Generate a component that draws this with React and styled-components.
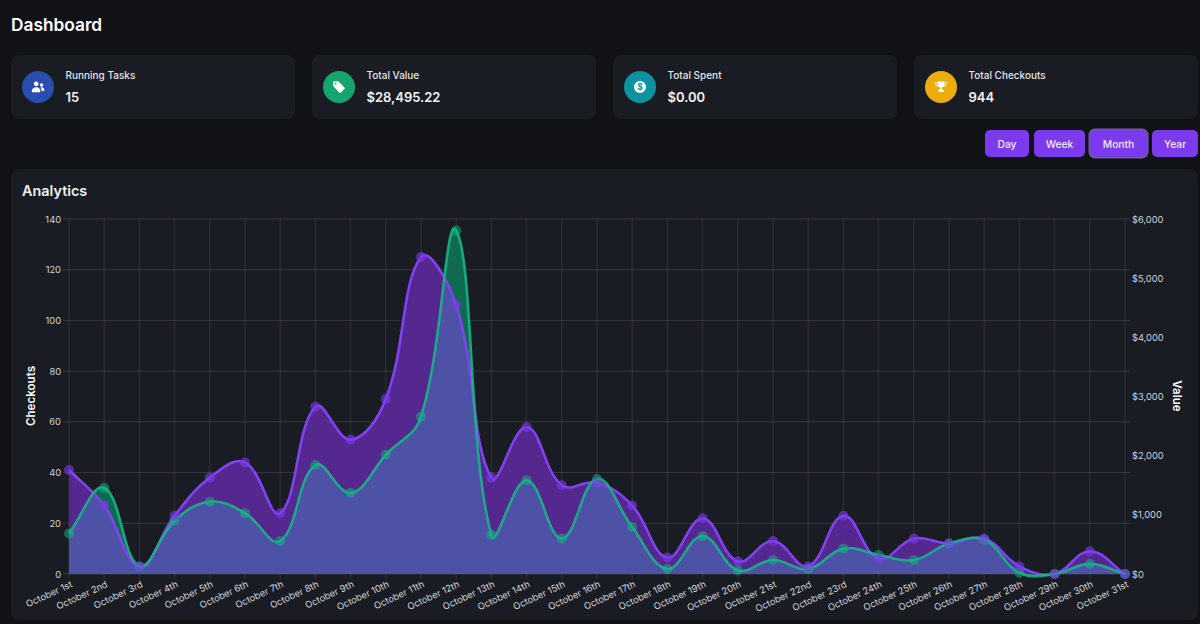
import React from "react";
import styled, { createGlobalStyle } from "styled-components";

const Global = createGlobalStyle`
  html, body { margin: 0; padding: 0; background: #111216; overflow: hidden; }
  body { font-family: Inter, "Liberation Sans", sans-serif; }
`;

const Page = styled.div`
  width: 1200px;
  height: 624px;
  box-sizing: border-box;
  padding: 14px 2px 0 11px;
  color: #fff;
  overflow: hidden;
`;
const Heading = styled.h1`
  margin: 0 0 19px;
  font-size: 17.3px;
  line-height: 22px;
  font-weight: 600;
  color: #fff;
`;
const Stats = styled.div`
  display: grid;
  grid-template-columns: repeat(4, 284px);
  column-gap: 17px;
`;
const Card = styled.div`
  height: 64px;
  box-sizing: border-box;
  padding: 0 11px;
  display: flex;
  align-items: center;
  gap: 12px;
  background: #1a1c23;
  border-radius: 8px;
`;
const Badge = styled.div`
  width: 32px;
  height: 32px;
  border-radius: 50%;
  background: ${(p) => p.$bg};
  display: flex;
  align-items: center;
  justify-content: center;
  flex: none;
`;
const CardText = styled.div`
  display: flex;
  flex-direction: column;
  gap: 6px;
  margin-left: -0.5px;
`;
const CardLabel = styled.div`
  font-size: 10px;
  line-height: 14px;
  font-weight: 500;
  color: #e2e4e9;
`;
const CardValue = styled.div`
  font-size: 13px;
  line-height: 18px;
  font-weight: 600;
  color: #f3f4f6;
`;
const Ranges = styled.div`
  display: flex;
  justify-content: flex-end;
  gap: 5px;
  margin-top: 11px;
  height: 28px;
`;
const RangeButton = styled.button`
  height: 27px;
  width: ${(p) => p.$w}px;
  box-sizing: border-box;
  padding: 0;
  border: none;
  border-radius: 5px;
  background: #7c3aed;
  color: #f3eaff;
  font-family: inherit;
  font-size: 10.3px;
  font-weight: 500;
  box-shadow: ${(p) => (p.$active ? "0 0 0 1.5px #6a6488" : "none")};
`;
const Panel = styled.section`
  margin-top: 11px;
  height: 451px;
  background: #1a1c23;
  border-radius: 8px;
  position: relative;
`;
const PanelTitle = styled.h2`
  margin: 0;
  padding: 13px 11px 0;
  font-size: 14.4px;
  line-height: 18px;
  font-weight: 600;
  color: #f0f1f4;
`;
const ChartSvg = styled.svg`
  display: block;
  position: absolute;
  left: 0;
  top: 0;
`;

const purple = [41,27,3,23,38,44,24,66,53,69,125,106,38,58,35,36,27,6.5,22,5,13,3,23,6,14,12,14,3,0,9,0];
const green = [16,34,3,21,28.5,24,13,43,32,47,62,135.5,15.5,37,14,37.5,18.5,2,15,1.5,5.5,2,10,7.5,5.5,12,13.5,0.5,0,4,0];

const X0 = 58, X1 = 1114, Y0 = 405, Y1 = 50;
const px = (i) => X0 + (i * (X1 - X0)) / 30;
const py = (v) => Y0 - (v / 140) * (Y0 - Y1);
const ord = (n) => {
  if (n === 1 || n === 21 || n === 31) return n + "st";
  if (n === 2 || n === 22) return n + "nd";
  if (n === 3 || n === 23) return n + "rd";
  return n + "th";
};

function spline(vals, t = 0.4) {
  const p = vals.map((v, i) => [px(i), py(v)]);
  let d = `M${p[0][0]} ${p[0][1]}`;
  const ctrl = (a, b, c) => {
    const d01 = Math.hypot(b[0] - a[0], b[1] - a[1]);
    const d12 = Math.hypot(c[0] - b[0], c[1] - b[1]);
    const s = d01 + d12 || 1;
    const fa = (t * d01) / s, fb = (t * d12) / s;
    return [
      [b[0] - fa * (c[0] - a[0]), b[1] - fa * (c[1] - a[1])],
      [b[0] + fb * (c[0] - a[0]), b[1] + fb * (c[1] - a[1])],
    ];
  };
  const cs = p.map((b, i) => ctrl(p[Math.max(i - 1, 0)], b, p[Math.min(i + 1, p.length - 1)]));
  for (let i = 1; i < p.length; i++) {
    const c1 = cs[i - 1][1], c2 = cs[i][0];
    d += `C${c1[0]} ${c1[1]} ${c2[0]} ${c2[1]} ${p[i][0]} ${p[i][1]}`;
  }
  return d;
}

const purpleLine = spline(purple);
const greenLine = spline(green);
const close = `L${X1} ${Y0}L${X0} ${Y0}Z`;

function Chart() {
  const hTicks = [0, 20, 40, 60, 80, 100, 120, 140];
  const rTicks = ["$0", "$1,000", "$2,000", "$3,000", "$4,000", "$5,000", "$6,000"];
  return (
    <ChartSvg width="1187" height="451" viewBox="0 0 1187 451">
      <defs>
        <clipPath id="purpleArea"><path d={purpleLine + close} /></clipPath>
      </defs>
      {hTicks.map((v) => (
        <line key={v} x1={X0 - 6} x2={X1 + 5} y1={py(v)} y2={py(v)} stroke="#ffffff" strokeOpacity="0.12" />
      ))}
      {purple.map((_, i) => (
        <line key={i} x1={px(i)} x2={px(i)} y1={Y1} y2={Y0 + 5} stroke="#ffffff" strokeOpacity="0.1" />
      ))}
      {hTicks.map((v) => (
        <text key={v} x={X0 - 8} y={py(v) + 3.5} textAnchor="end" fontSize="9.3" fill="#d2d4da">{v}</text>
      ))}
      {rTicks.map((v, i) => (
        <text key={v} x={X1 + 7} y={Y0 - (i * (Y0 - Y1)) / 6 + 3.5} fontSize="9.3" fill="#d2d4da">{v}</text>
      ))}
      <path d={purpleLine + close} fill="#55288f" />
      <path d={greenLine + close} fill="#0f6a50" />
      <path d={greenLine + close} fill="#4e52a6" clipPath="url(#purpleArea)" />
      <path d={purpleLine} fill="none" stroke="#8142f2" strokeWidth="2.6" />
      <path d={greenLine} fill="none" stroke="#18b487" strokeOpacity="0.9" strokeWidth="2.6" />
      {green.map((v, i) => (
        <circle key={i} cx={px(i)} cy={py(v)} r="5" fill="#10b981" fillOpacity="0.5" />
      ))}
      {purple.map((v, i) => (
        <circle key={i} cx={px(i)} cy={py(v)} r="5" fill="#7c3aed" fillOpacity="0.6" />
      ))}
      {purple.map((_, i) => (
        <text
          key={i}
          transform={`translate(${px(i) + 1} ${Y0 + 6}) rotate(-25)`}
          textAnchor="end"
          dominantBaseline="hanging"
          fontSize="9.3"
          fill="#d2d4da"
        >
          {`October ${ord(i + 1)}`}
        </text>
      ))}
      <text transform={`translate(24 227) rotate(-90)`} textAnchor="middle" fontSize="11.6" fontWeight="600" fill="#fff">Checkouts</text>
      <text transform={`translate(1162 227) rotate(90)`} textAnchor="middle" fontSize="11.6" fontWeight="600" fill="#fff">Value</text>
    </ChartSvg>
  );
}

const UsersIcon = () => (
  <svg width="14" height="14" viewBox="0 0 14 14" fill="#fff">
    <circle cx="5.2" cy="3.8" r="2.4" />
    <circle cx="10.6" cy="5" r="1.7" />
    <path d="M.8 11.6c0-2.8 1.6-4.4 4.4-4.4s4.2 1.6 4.2 4.4c0 .4-.3.6-.8.6H1.6c-.5 0-.8-.2-.8-.6z" />
    <path d="M9.6 7.4c2.2-.5 3.8.6 3.8 2.8 0 .4-.3.7-.7.7h-2.2c0-1.4-.3-2.6-.9-3.5z" />
  </svg>
);
const TagIcon = () => (
  <svg width="14" height="14" viewBox="0 0 14 14" fill="#fff">
    <path fillRule="evenodd" d="M1.2 2.2C1.2 1.6 1.6 1.2 2.2 1.2h3.4c.4 0 .7.1 1 .4l5.8 5.8c.5.5.5 1.2 0 1.7l-3.4 3.4c-.5.5-1.2.5-1.7 0L1.6 6.6c-.3-.3-.4-.6-.4-1zM3.6 4.4a.9.9 0 1 0 0-1.8.9.9 0 0 0 0 1.8z" />
  </svg>
);
const DollarIcon = () => (
  <svg width="14" height="14" viewBox="0 0 14 14">
    <circle cx="7" cy="7" r="6" fill="#fff" />
    <text x="7" y="10" textAnchor="middle" fontSize="8.5" fontWeight="700" fill="#0e929f">$</text>
  </svg>
);
const TrophyIcon = () => (
  <svg width="14" height="14" viewBox="0 0 14 14" fill="none">
    <path d="M3.6 1.6h6.8v2.8c0 1.6-1.3 2.6-2.6 3v.9c0 1 1.4 1.7 2 2.2v1.6H4.2v-1.6c.6-.5 2-1.2 2-2.2v-.9c-1.3-.4-2.6-1.4-2.6-3z" fill="#fff" />
    <path d="M3.6 2.6H1.4c0 2 1 3.2 2.8 3.5M10.4 2.6h2.2c0 2-1 3.2-2.8 3.5" stroke="#fff" strokeWidth="1" />
  </svg>
);

const stats = [
  { label: "Running Tasks", value: "15", bg: "#2a4db0", icon: <UsersIcon /> },
  { label: "Total Value", value: "$28,495.22", bg: "#16a56f", icon: <TagIcon /> },
  { label: "Total Spent", value: "$0.00", bg: "#0e929f", icon: <DollarIcon /> },
  { label: "Total Checkouts", value: "944", bg: "#eaad0c", icon: <TrophyIcon /> },
];

const ranges = [
  { label: "Day", w: 44 },
  { label: "Week", w: 51 },
  { label: "Month", w: 57, active: true },
  { label: "Year", w: 46 },
];

export default function App() {
  return (
    <Page>
      <Global />
      <Heading>Dashboard</Heading>
      <Stats>
        {stats.map((s) => (
          <Card key={s.label}>
            <Badge $bg={s.bg}>{s.icon}</Badge>
            <CardText>
              <CardLabel>{s.label}</CardLabel>
              <CardValue>{s.value}</CardValue>
            </CardText>
          </Card>
        ))}
      </Stats>
      <Ranges>
        {ranges.map((r) => (
          <RangeButton key={r.label} $w={r.w} $active={r.active}>{r.label}</RangeButton>
        ))}
      </Ranges>
      <Panel>
        <PanelTitle>Analytics</PanelTitle>
        <Chart />
      </Panel>
    </Page>
  );
}
